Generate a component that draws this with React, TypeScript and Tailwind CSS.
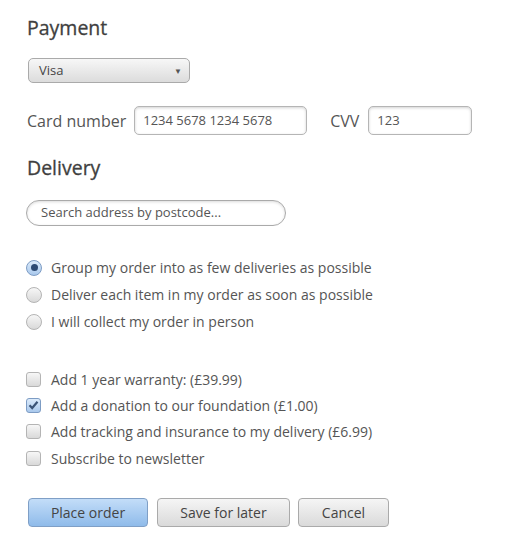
import { useState } from "react";

const deliveryOptions = [
  "Group my order into as few deliveries as possible",
  "Deliver each item in my order as soon as possible",
  "I will collect my order in person",
];

const extras = [
  { label: "Add 1 year warranty: (£39.99)", checked: false },
  { label: "Add a donation to our foundation (£1.00)", checked: true },
  { label: "Add tracking and insurance to my delivery (£6.99)", checked: false },
  { label: "Subscribe to newsletter", checked: false },
];

function Radio({ on }: { on: boolean }) {
  return (
    <span
      className={`flex h-4 w-4 shrink-0 items-center justify-center rounded-full border ${
        on
          ? "border-[#7d9cc4] bg-gradient-to-b from-[#dcebfb] to-[#a9c8ec]"
          : "border-[#b4b4b4] bg-gradient-to-b from-[#f7f7f7] to-[#d9d9d9]"
      }`}
    >
      {on && <span className="h-[7px] w-[7px] rounded-full bg-[#2d4a73]" />}
    </span>
  );
}

function Check({ on }: { on: boolean }) {
  return (
    <span
      className={`flex h-[15px] w-[15px] shrink-0 items-center justify-center rounded-[3px] border ${
        on
          ? "border-[#7d9cc4] bg-gradient-to-b from-[#dcebfb] to-[#a9c8ec]"
          : "border-[#b4b4b4] bg-gradient-to-b from-[#f7f7f7] to-[#d9d9d9]"
      }`}
    >
      {on && (
        <svg width="11" height="10" viewBox="0 0 11 10">
          <path d="M1.5 5.2 L4.2 8 L9.5 1.8" fill="none" stroke="#3b5477" strokeWidth="2.2" />
        </svg>
      )}
    </span>
  );
}

export default function App() {
  const [delivery, setDelivery] = useState(0);
  const [checks, setChecks] = useState(extras.map((e) => e.checked));

  return (
    <div className="min-h-screen bg-white pl-[27px] pt-[14px] text-[#555] [font-family:'Open_Sans',sans-serif]">
      {/* Payment */}
      <h2 className="text-[19.5px] font-normal leading-[28px] text-[#3f3f3f] [-webkit-text-stroke:0.3px_#3f3f3f]">Payment</h2>

      <div className="mt-[16px] ml-px flex h-[25px] w-[162px] items-center justify-between rounded-[5px] border border-[#aaa] bg-gradient-to-b from-[#f7f7f7] to-[#dcdcdc] pl-[10px] pr-[7px] text-[13px] text-[#444]">
        <span>Visa</span>
        <span className="text-[8px] text-[#555]">▼</span>
      </div>

      <div className="mt-[23px] flex items-center">
        <span className="text-[16px]">Card number</span>
        <div className="ml-[8px] flex h-[29px] w-[173px] items-center rounded-[5px] border border-[#b5b5b5] bg-white pl-[8px] text-[13px] text-[#555] shadow-[inset_0_1px_3px_rgba(0,0,0,0.18)]">
          1234 5678 1234 5678
        </div>
        <span className="ml-[23px] text-[16px]">CVV</span>
        <div className="ml-[9px] flex h-[29px] w-[104px] items-center rounded-[5px] border border-[#b5b5b5] bg-white pl-[8px] text-[13px] text-[#555] shadow-[inset_0_1px_3px_rgba(0,0,0,0.18)]">
          123
        </div>
      </div>

      {/* Delivery */}
      <h2 className="mt-[19px] text-[19.5px] font-normal leading-[28px] text-[#3f3f3f] [-webkit-text-stroke:0.3px_#3f3f3f]">Delivery</h2>

      <div className="-ml-px mt-[18px] flex h-[26px] w-[260px] items-center rounded-full border border-[#aaa] bg-white pl-[14px] text-[13px] text-[#555] shadow-[inset_0_1px_3px_rgba(0,0,0,0.15)]">
        Search address by postcode...
      </div>

      <div className="mt-[28px] flex flex-col">
        {deliveryOptions.map((opt, i) => (
          <label
            key={opt}
            onClick={() => setDelivery(i)}
            className="-ml-px flex h-[27px] cursor-pointer items-center gap-[9px] text-[14px]"
          >
            <Radio on={delivery === i} />
            {opt}
          </label>
        ))}
      </div>

      <div className="mt-[31px] flex flex-col">
        {extras.map((e, i) => (
          <label
            key={e.label}
            onClick={() => setChecks((c) => c.map((v, j) => (j === i ? !v : v)))}
            className="-ml-px flex h-[26.3px] cursor-pointer items-center gap-[10px] text-[14px]"
          >
            <Check on={checks[i]} />
            {e.label}
          </label>
        ))}
      </div>

      {/* Actions */}
      <div className="mt-[27px] ml-px flex gap-[8px] text-[14px] text-[#444]">
        <button className="h-[29px] w-[120px] rounded-[4px] border border-[#7f9fc6] bg-gradient-to-b from-[#c3ddf8] to-[#8fbbea]">
          Place order
        </button>
        <button className="ml-px h-[29px] w-[133px] rounded-[4px] border border-[#aaa] bg-gradient-to-b from-[#f5f5f5] to-[#dadada]">
          Save for later
        </button>
        <button className="h-[29px] w-[91px] rounded-[4px] border border-[#aaa] bg-gradient-to-b from-[#f5f5f5] to-[#dadada]">
          Cancel
        </button>
      </div>
    </div>
  );
}
